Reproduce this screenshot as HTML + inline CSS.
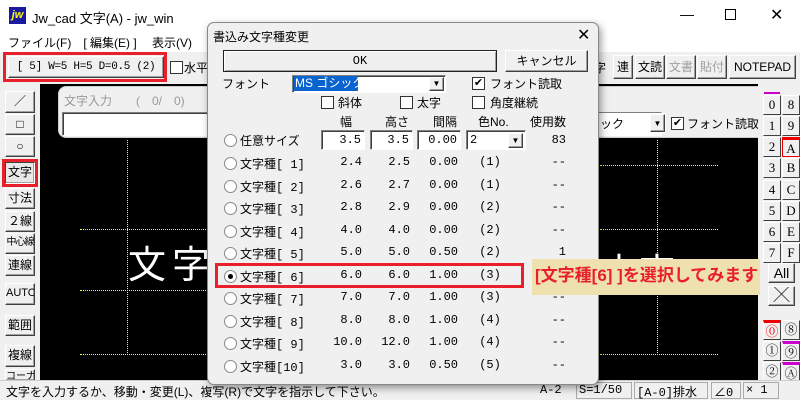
<!DOCTYPE html>
<html><head><meta charset="utf-8"><style>
*{margin:0;padding:0;box-sizing:border-box}
body{width:800px;height:400px;overflow:hidden;background:#f0f0f0;font-family:"Liberation Sans","Noto Sans CJK JP",sans-serif;font-size:12px;color:#000;position:relative;white-space:nowrap}
.a{position:absolute}
.btn{position:absolute;background:#f0f0f0;border:1px solid;border-color:#fff #404040 #404040 #fff;box-shadow:inset -1px -1px 0 #a0a0a0;text-align:center;font-size:12px;line-height:18px;overflow:hidden}
.num{position:absolute;background:#f0f0f0;border:1px solid;border-color:#fff #404040 #404040 #fff;font-family:"Liberation Serif","Noto Serif CJK SC",serif;font-size:13px;text-align:center;line-height:17px;width:18px;height:20px}
.in{position:absolute;background:#fff;border:1px solid;border-color:#808080 #fff #fff #808080;box-shadow:inset 1px 1px 0 #404040}
.cb{position:absolute;width:13px;height:13px;background:#fff;border:1px solid #333}
.rd{position:absolute;width:13px;height:13px;border-radius:50%;background:#fff;border:1px solid #888}
.mono{font-family:"Liberation Mono","Noto Sans CJK JP",monospace}
.dh{position:absolute;height:0;border-top:1px dotted #ff0}
.dv{position:absolute;width:0;border-left:1px dotted #ff0}
</style></head><body>
<div class="a" style="left:0;top:0;width:800px;height:32px;background:#fff"></div>
<div class="a" style="left:9px;top:7px;width:17px;height:17px;background:#1a1aa0;color:#ff0;font-weight:bold;font-style:italic;font-size:11px;line-height:17px;text-align:center">jw</div>
<div class="a" style="left:32px;top:8px;font-size:13px">Jw_cad 文字(A) - jw_win</div>
<div class="a" style="left:680px;top:6px;font-size:14px">—</div>
<div class="a" style="left:725px;top:9px;width:11px;height:11px;border:1px solid #000"></div>
<div class="a" style="left:770px;top:5px;font-size:16px">✕</div>
<div class="a" style="left:0;top:32px;width:800px;height:20px;background:#fff"></div>
<div class="a" style="left:8px;top:34px;font-size:12px">ファイル(F)　[ 編集(E) ]　 表示(V)　 [ 作</div>
<div class="a" style="left:3px;top:52px;width:164px;height:30px;border:3px solid #e8202a"></div>
<div class="btn mono" style="left:8px;top:56px;width:156px;height:22px;line-height:20px;font-size:11px;letter-spacing:-0.3px">[ 5] W=5 H=5 D=0.5 (2)</div>
<div class="cb" style="left:170px;top:61px"></div>
<div class="a" style="left:184px;top:59px">水平</div>
<div class="a" style="left:594px;top:59px">字</div>
<div class="btn" style="left:613px;top:55px;width:20px;height:24px;line-height:22px">連</div>
<div class="btn" style="left:635px;top:55px;width:30px;height:24px;line-height:22px">文読</div>
<div class="btn" style="left:666px;top:55px;width:30px;height:24px;line-height:22px;color:#a0a0a0">文書</div>
<div class="btn" style="left:697px;top:55px;width:30px;height:24px;line-height:22px;color:#a0a0a0">貼付</div>
<div class="btn" style="left:729px;top:55px;width:67px;height:24px;line-height:22px">NOTEPAD</div>
<div class="a" style="left:40px;top:84px;width:718px;height:296px;background:#000"></div>
<div class="dh" style="left:80px;top:229px;width:130px"></div>
<div class="dh" style="left:80px;top:290px;width:130px"></div>
<div class="dh" style="left:80px;top:354px;width:130px"></div>
<div class="dv" style="left:127px;top:140px;height:215px"></div>
<div class="dh" style="left:600px;top:165px;width:118px"></div>
<div class="dh" style="left:600px;top:229px;width:118px"></div>
<div class="dh" style="left:600px;top:354px;width:118px"></div>
<div class="dv" style="left:657px;top:140px;height:215px"></div>
<div class="a" style="left:128px;top:244px;color:#fff;font-size:38px;line-height:44px;letter-spacing:6px">文字</div>
<div class="a" style="left:600px;top:252px;color:#fff;font-size:38px;line-height:44px">文字</div>
<div class="a" style="left:58px;top:86px;width:735px;height:52px;background:#f0f0f0;border-radius:8px;border:1px solid #ccc"></div>
<div class="a" style="left:64px;top:92px;color:#999;font-size:12px">文字入力　　(　0/　0)</div>
<div class="in" style="left:62px;top:112px;width:600px;height:24px"></div>
<div class="a" style="left:598px;top:113px;width:68px;height:20px;background:#fff"></div>
<div class="a" style="left:600px;top:115px">ック</div>
<div class="btn" style="left:650px;top:114px;width:15px;height:18px;font-size:8px">▼</div>
<div class="cb" style="left:671px;top:117px;font-size:11px;line-height:11px;text-align:center">✔</div>
<div class="a" style="left:687px;top:115px">フォント読取</div>
<div class="a" style="left:0;top:84px;width:40px;height:296px;background:#f0f0f0"></div>
<div class="btn" style="left:5px;top:91px;width:30px;height:22px">／</div>
<div class="btn" style="left:5px;top:114px;width:30px;height:21px">□</div>
<div class="btn" style="left:5px;top:136px;width:30px;height:21px">○</div>
<div class="a" style="left:2px;top:159px;width:36px;height:28px;border:3px solid #e8202a"></div>
<div class="btn" style="left:5px;top:162px;width:30px;height:22px;border-color:#404040 #fff #fff #404040;background:#e8e8e8">文字</div>
<div class="btn" style="left:5px;top:188px;width:30px;height:21px">寸法</div>
<div class="btn" style="left:5px;top:211px;width:30px;height:21px">２線</div>
<div class="btn" style="left:5px;top:233px;width:30px;height:21px;font-size:10px;letter-spacing:-1px">中心線</div>
<div class="btn" style="left:5px;top:255px;width:30px;height:21px">連線</div>
<div class="btn" style="left:5px;top:283px;width:30px;height:22px;font-size:11px">AUTO</div>
<div class="btn" style="left:5px;top:315px;width:30px;height:21px">範囲</div>
<div class="btn" style="left:5px;top:345px;width:30px;height:22px">複線</div>
<div class="btn" style="left:5px;top:369px;width:30px;height:12px;line-height:14px;font-size:10px">コーナー</div>
<div class="a" style="left:758px;top:84px;width:42px;height:296px;background:#f0f0f0"></div>
<div class="a" style="left:764px;top:92px;width:16px;height:2px;background:#c0c"></div>
<div class="num" style="left:763px;top:95px">0</div><div class="num" style="left:782px;top:95px">8</div>
<div class="num" style="left:763px;top:116px">1</div><div class="num" style="left:782px;top:116px">9</div>
<div class="num" style="left:763px;top:137px">2</div><div class="num" style="left:782px;top:137px;border:1px solid #e00;border-top:3px solid #e00">A</div>
<div class="num" style="left:763px;top:158px">3</div><div class="num" style="left:782px;top:158px">B</div>
<div class="num" style="left:763px;top:180px">4</div><div class="num" style="left:782px;top:180px">C</div>
<div class="num" style="left:763px;top:201px">5</div><div class="num" style="left:782px;top:201px">D</div>
<div class="num" style="left:763px;top:222px">6</div><div class="num" style="left:782px;top:222px">E</div>
<div class="num" style="left:763px;top:243px">7</div><div class="num" style="left:782px;top:243px">F</div>
<div class="btn" style="left:768px;top:263px;width:27px;height:20px;font-size:14px">All</div>
<div class="btn" style="left:768px;top:286px;width:27px;height:20px;font-size:16px;font-weight:100">╳</div>
<div class="num" style="left:763px;top:320px;color:#e00;border-top:3px solid #e00">⓪</div><div class="num" style="left:782px;top:320px">⑧</div>
<div class="num" style="left:763px;top:341px">①</div><div class="num" style="left:782px;top:341px;border-top:3px solid #c0c">⑨</div>
<div class="num" style="left:763px;top:362px">②</div><div class="num" style="left:782px;top:362px;border-top:3px solid #c0c">Ⓐ</div>
<div class="a" style="left:0;top:380px;width:800px;height:20px;background:#f0f0f0;border-top:1px solid #ccc"></div>
<div class="a" style="left:6px;top:383px;font-size:12px">文字を入力するか、移動・変更(L)、複写(R)で文字を指示して下さい。</div>
<div class="a mono" style="left:540px;top:383px">A-2</div>
<div class="a mono" style="left:576px;top:382px;width:56px;height:17px;border:1px solid #aaa;padding-left:2px">S=1/50</div>
<div class="a mono" style="left:634px;top:382px;width:74px;height:17px;border:1px solid #aaa;padding-left:2px">[A-0]排水</div>
<div class="a mono" style="left:711px;top:382px;width:30px;height:17px;border:1px solid #aaa;padding-left:2px">∠0</div>
<div class="a mono" style="left:743px;top:382px;width:36px;height:17px;border:1px solid #aaa;padding-left:2px">× 1</div>
<div class="a" style="left:207px;top:22px;width:392px;height:363px;background:#f0f0f0;border:1px solid #888;border-radius:7px;box-shadow:2px 3px 8px rgba(0,0,0,.4)"></div>
<div class="a" style="left:213px;top:28px;font-size:12px">書込み文字種変更</div>
<div class="a" style="left:577px;top:25px;font-size:16px">✕</div>
<div class="btn mono" style="left:223px;top:50px;width:274px;height:22px;line-height:20px;border-color:#222;box-shadow:inset 1px 1px 0 #fff,inset -1px -1px 0 #a0a0a0">OK</div>
<div class="btn" style="left:505px;top:50px;width:83px;height:22px;line-height:20px">キャンセル</div>
<div class="a" style="left:222px;top:75px">フォント</div>
<div class="in" style="left:292px;top:75px;width:154px;height:18px"></div>
<div class="a" style="left:294px;top:76px;height:15px;width:64px;background:#0a64d0;color:#fff;font-size:12px;line-height:15px;padding-left:1px;overflow:hidden">MS ゴシック</div>
<div class="btn" style="left:429px;top:77px;width:15px;height:14px;font-size:8px;line-height:12px">▼</div>
<div class="cb" style="left:472px;top:77px;font-size:11px;line-height:11px;text-align:center">✔</div>
<div class="a" style="left:490px;top:75px">フォント読取</div>
<div class="cb" style="left:321px;top:96px"></div><div class="a" style="left:338px;top:94px">斜体</div>
<div class="cb" style="left:400px;top:96px"></div><div class="a" style="left:417px;top:94px">太字</div>
<div class="cb" style="left:472px;top:96px"></div><div class="a" style="left:490px;top:94px">角度継続</div>
<div class="a" style="left:340px;top:113px">幅</div>
<div class="a" style="left:385px;top:113px">高さ</div>
<div class="a" style="left:433px;top:113px">間隔</div>
<div class="a" style="left:478px;top:113px">色No.</div>
<div class="a" style="left:530px;top:113px">使用数</div>
<div class="rd" style="left:224px;top:134px"></div>
<div class="a" style="left:240px;top:132px">任意サイズ</div>
<div class="in mono" style="left:321px;top:130px;width:44px;height:20px;text-align:right;padding:2px 3px">3.5</div>
<div class="in mono" style="left:370px;top:130px;width:43px;height:20px;text-align:right;padding:2px 3px">3.5</div>
<div class="in mono" style="left:417px;top:130px;width:44px;height:20px;text-align:right;padding:2px 3px">0.00</div>
<div class="in mono" style="left:466px;top:130px;width:60px;height:20px;padding:2px 3px">2</div>
<div class="btn" style="left:508px;top:133px;width:15px;height:15px;font-size:8px;line-height:13px">▼</div>
<div class="a mono" style="left:540px;top:133px;width:26px;text-align:right">83</div>
<div id="rows"></div>
<div class="a" style="left:215px;top:263px;width:309px;height:25px;border:3px solid #e8202a"></div>
<div class="a" style="left:532px;top:259px;width:228px;height:36px;background:#efe0b0"></div>
<div class="a" style="left:535px;top:264px;color:#e8202a;font-weight:bold;font-size:17px;line-height:24px">[文字種[6] ]を選択してみます</div>
<script>
var d=[["[ 1]","2.4","2.5","0.00","(1)","--"],["[ 2]","2.6","2.7","0.00","(1)","--"],["[ 3]","2.8","2.9","0.00","(2)","--"],["[ 4]","4.0","4.0","0.00","(2)","--"],["[ 5]","5.0","5.0","0.50","(2)","1"],["[ 6]","6.0","6.0","1.00","(3)","--"],["[ 7]","7.0","7.0","1.00","(3)","--"],["[ 8]","8.0","8.0","1.00","(4)","--"],["[ 9]","10.0","12.0","1.00","(4)","--"],["[10]","3.0","3.0","0.50","(5)","--"]];
var h="";d.forEach(function(r,i){var y=155+i*22.5;
h+='<div class="rd" style="left:224px;top:'+(y+2)+'px">'+(i==5?'<div style="width:5px;height:5px;border-radius:50%;background:#000;margin:3px"></div>':'')+'</div>';
h+='<div class="a" style="left:240px;top:'+y+'px">文字種<span class="mono">'+r[0]+'</span></div>';
h+='<div class="a mono" style="left:310px;top:'+y+'px;width:52px;text-align:right">'+r[1]+'</div>';
h+='<div class="a mono" style="left:360px;top:'+y+'px;width:50px;text-align:right">'+r[2]+'</div>';
h+='<div class="a mono" style="left:408px;top:'+y+'px;width:50px;text-align:right">'+r[3]+'</div>';
h+='<div class="a mono" style="left:470px;top:'+y+'px;width:40px;text-align:center">'+r[4]+'</div>';
h+='<div class="a mono" style="left:530px;top:'+y+'px;width:36px;text-align:right">'+r[5]+'</div>';});
document.getElementById("rows").innerHTML=h;
</script>
</body></html>
